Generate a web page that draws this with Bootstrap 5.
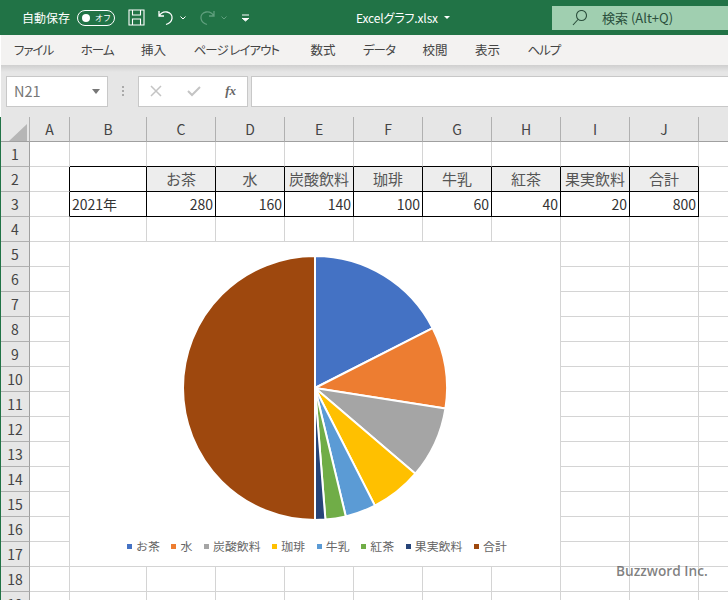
<!DOCTYPE html>
<html lang="ja">
<head>
<meta charset="utf-8">
<title>Excelグラフ.xlsx</title>
<link href="https://cdn.jsdelivr.net/npm/bootstrap@5.3.0/dist/css/bootstrap.min.css" rel="stylesheet">
<style>
html,body{height:600px;overflow:hidden;background:#fff}
body{font-family:"Noto Sans CJK JP","Liberation Sans",sans-serif;color:#444;width:728px;position:relative}
.xl-title{height:35px;background:#217346;color:#fff;font-size:12px;padding-left:22px}
.xl-toggle{width:38px;height:16px;border:1.3px solid #fff;border-radius:8px;margin-left:7px;padding:0 3px;font-size:8px;justify-content:space-between}
.xl-knob{width:8px;height:8px;background:#fff;border-radius:50%;margin-left:1px}
.xl-qat{margin-left:13px}
.xl-chev{margin-left:6px}
.xl-redo{margin-left:13px}
.xl-more{margin-left:14px}
.xl-file{position:absolute;left:356px;top:0;height:35px;font-feature-settings:"palt";letter-spacing:-.15px}
.xl-filecaret{margin-left:6px}
.xl-search{position:absolute;left:552px;top:6px;width:176px;height:24px;background:#a0cfb0;color:#2b4f3c;padding-left:20px}
.xl-search span{margin-left:15px;font-size:13px}
.xl-tabs{height:30px;background:#f3f2f1;font-size:12.5px;padding-left:13px;gap:27.5px;color:#444;margin-left:1px;font-feature-settings:"palt"}
.xl-kana{letter-spacing:-1px}
.xl-fbar{height:52px;padding:11px 0 11px 6px;background:linear-gradient(#cfcfcf 0,#e6e6e6 7px);margin-left:1px}
.xl-namebox,.xl-fbtns,.xl-finput{height:31px;background:#fff;border:1px solid #c8c8c8}
.xl-namebox{width:102px;padding:0 7px;font-size:14.5px;color:#777;margin-left:-1px}
.xl-caret{width:0;height:0;border:4px solid transparent;border-top:5px solid #777;border-bottom:0}
.xl-caret-w{border-width:3px;border-top-color:#fff;border-bottom:0}
.xl-dots{width:30px;color:#999}
.xl-fbtns{width:110px;margin-right:3px;padding:0 11px;justify-content:space-between}
.xl-fx{font:italic 700 13px "Liberation Serif",serif;color:#666}
.xl-finput{flex:1;border-right:0}
.xl-wrap{border-left:1px solid #217346;position:relative;height:483px;overflow:hidden;margin-top:0}
table.xl-sheet{table-layout:fixed;width:767px;border-collapse:separate;border-spacing:0;margin:0;font-size:14px;color:#333}
.xl-sheet col.c0{width:29px}
.xl-sheet col.c1{width:40px}
.xl-sheet col.c2{width:77px}
.xl-sheet col.c3{width:69px}
.xl-sheet th,.xl-sheet td{height:25px;padding:0 2px;line-height:24px;border:0;border-right:1px solid #d4d4d4;border-bottom:1px solid #d4d4d4;background:#fff;box-shadow:none;white-space:nowrap;overflow:hidden;font-weight:400;color:#333}
.xl-sheet thead th{background:#e6e6e6;text-align:center;color:#444;border-right-color:#b0b0b0;border-bottom-color:#a0a0a0}
.xl-sheet tbody th{background:#e6e6e6;text-align:center;color:#444;border-right-color:#a0a0a0;border-bottom-color:#b0b0b0}
.xl-sheet td.bk-r{border-right-color:#000}
.xl-sheet td.bk-b{border-bottom-color:#000}
.xl-sheet td.hd{background:#ededed;text-align:center;color:#555;padding:0;font-size:15px}
.xl-sheet td.num{text-align:right}
.xl-sheet th.xl-cnr{padding:0}
.xl-corner{display:block;margin:4px 0 0 8px}
.xl-chart{position:absolute;left:69px;top:125px;width:490px;height:324px;background:#fff;overflow:hidden}
.xl-chart svg{display:block}
.xl-legend{position:absolute;left:57px;top:294px;gap:11.7px;font-size:11.9px;line-height:20px;color:#666;white-space:nowrap}
.xl-sw{width:5px;height:5px;margin-right:4px;display:inline-block}
.c-a{background:#4472c4}.c-b{background:#ed7d31}.c-c{background:#a5a5a5}.c-d{background:#ffc000}
.c-e{background:#5b9bd5}.c-f{background:#70ad47}.c-g{background:#264478}.c-h{background:#9e480e}
.xl-mark{position:absolute;left:616px;top:562px;font-family:"Open Sans","Liberation Sans",sans-serif;font-size:13.7px;font-weight:600;color:rgba(80,80,80,.72);line-height:18px;white-space:nowrap}
</style>
</head>
<body>
<header class="xl-title d-flex align-items-center">
  <span>自動保存</span>
  <span class="xl-toggle d-flex align-items-center"><span class="xl-knob"></span><span>オフ</span></span>
  <svg class="xl-qat" width="17" height="17" viewBox="0 0 17 17" fill="none" stroke="#fff" stroke-width="1.1"><path d="M1 1h15v15H1zM4.500 1v5h8V1M4.500 16v-6h8v6"/></svg>
  <svg class="xl-qat" width="16" height="17" viewBox="0 0 16 17" fill="none" stroke="#fff" stroke-width="1.3"><path d="M1 2v5h5M1.300 7C3 3.500 6 2.500 9 3c3.500.7 5.500 3.500 5 6.500-.4 2.800-3 5-6 6"/></svg>
  <svg class="xl-chev" width="6" height="4" viewBox="0 0 6 4" fill="none" stroke="#fff"><path d="M.5.500 3 3 5.500.5"/></svg>
  <svg class="xl-redo" width="16" height="17" viewBox="0 0 16 17" fill="none" stroke="#5f9f7d" stroke-width="1.300"><path d="M15 2v5h-5M14.700 7C13 3.500 10 2.500 7 3c-3.500.7-5.500 3.500-5 6.500.4 2.800 3 5 6 6"/></svg>
  <svg class="xl-chev" width="6" height="4" viewBox="0 0 6 4" fill="none" stroke="#5f9f7d"><path d="M.5.500 3 3 5.500.5"/></svg>
  <svg class="xl-more" width="9" height="8" viewBox="0 0 9 8" fill="none" stroke="#fff"><path d="M1 1h7"/><path d="M1 4l3.500 3L8 4" fill="#fff"/></svg>
  <div class="xl-file d-flex align-items-center"><span>Excelグラフ.xlsx</span><span class="xl-caret xl-caret-w xl-filecaret"></span></div>
  <div class="xl-search d-flex align-items-center">
    <svg width="15" height="16" viewBox="0 0 15 16" fill="none" stroke="#2b4f3c" stroke-width="1.100"><circle cx="9.500" cy="5.500" r="5"/><path d="M6 9.500 1 15"/></svg>
    <span>検索 (Alt+Q)</span>
  </div>
</header>
<nav class="xl-tabs d-flex align-items-center">
  <span class="xl-kana">ファイル</span><span class="xl-kana">ホーム</span><span>挿入</span><span class="xl-kana">ページ レイアウト</span><span class="ms-1">数式</span><span class="xl-kana">データ</span><span>校閲</span><span>表示</span><span class="xl-kana">ヘルプ</span>
</nav>
<div class="xl-fbar d-flex align-items-center">
  <div class="xl-namebox d-flex align-items-center justify-content-between"><span>N21</span><span class="xl-caret"></span></div>
  <div class="xl-dots d-flex justify-content-center">
    <svg width="3" height="11" viewBox="0 0 3 11" fill="#aaa"><rect x="0" y="0" width="2" height="2"/><rect x="0" y="4" width="2" height="2"/><rect x="0" y="8" width="2" height="2"/></svg>
  </div>
  <div class="xl-fbtns d-flex align-items-center">
    <svg width="12" height="12" viewBox="0 0 12 12" stroke="#c4c4c4" stroke-width="1.500"><path d="M1 1l10 10M11 1 1 11"/></svg>
    <svg width="14" height="12" viewBox="0 0 14 12" fill="none" stroke="#c4c4c4" stroke-width="2"><path d="M1 6l4 4 8-8"/></svg>
    <span class="xl-fx">fx</span>
  </div>
  <div class="xl-finput"></div>
</div>
<div class="xl-wrap">
  <table class="table xl-sheet">
    <colgroup><col class="c0"><col class="c1"><col class="c2"><col class="c3"><col class="c3"><col class="c3"><col class="c3"><col class="c3"><col class="c3"><col class="c3"><col class="c3"><col class="c3"></colgroup>
    <thead><tr><th class="xl-cnr"><svg class="xl-corner" width="18" height="17" viewBox="0 0 18 17"><path d="M18 0v17H0z" fill="#b6b6b6"/></svg></th><th>A</th><th>B</th><th>C</th><th>D</th><th>E</th><th>F</th><th>G</th><th>H</th><th>I</th><th>J</th><th></th></tr></thead>
    <tbody>
      <tr><th>1</th><td></td><td class="bk-b"></td><td class="bk-b"></td><td class="bk-b"></td><td class="bk-b"></td><td class="bk-b"></td><td class="bk-b"></td><td class="bk-b"></td><td class="bk-b"></td><td class="bk-b"></td><td></td></tr>
      <tr><th>2</th><td class="bk-r"></td><td class="bk-r bk-b"></td><td class="bk-r bk-b hd">お茶</td><td class="bk-r bk-b hd">水</td><td class="bk-r bk-b hd">炭酸飲料</td><td class="bk-r bk-b hd">珈琲</td><td class="bk-r bk-b hd">牛乳</td><td class="bk-r bk-b hd">紅茶</td><td class="bk-r bk-b hd">果実飲料</td><td class="bk-r bk-b hd">合計</td><td></td></tr>
      <tr><th>3</th><td class="bk-r"></td><td class="bk-r bk-b">2021年</td><td class="bk-r bk-b num">280</td><td class="bk-r bk-b num">160</td><td class="bk-r bk-b num">140</td><td class="bk-r bk-b num">100</td><td class="bk-r bk-b num">60</td><td class="bk-r bk-b num">40</td><td class="bk-r bk-b num">20</td><td class="bk-r bk-b num">800</td><td></td></tr>
      <tr><th>4</th><td></td><td></td><td></td><td></td><td></td><td></td><td></td><td></td><td></td><td></td><td></td></tr>
      <tr><th>5</th><td></td><td></td><td></td><td></td><td></td><td></td><td></td><td></td><td></td><td></td><td></td></tr>
      <tr><th>6</th><td></td><td></td><td></td><td></td><td></td><td></td><td></td><td></td><td></td><td></td><td></td></tr>
      <tr><th>7</th><td></td><td></td><td></td><td></td><td></td><td></td><td></td><td></td><td></td><td></td><td></td></tr>
      <tr><th>8</th><td></td><td></td><td></td><td></td><td></td><td></td><td></td><td></td><td></td><td></td><td></td></tr>
      <tr><th>9</th><td></td><td></td><td></td><td></td><td></td><td></td><td></td><td></td><td></td><td></td><td></td></tr>
      <tr><th>10</th><td></td><td></td><td></td><td></td><td></td><td></td><td></td><td></td><td></td><td></td><td></td></tr>
      <tr><th>11</th><td></td><td></td><td></td><td></td><td></td><td></td><td></td><td></td><td></td><td></td><td></td></tr>
      <tr><th>12</th><td></td><td></td><td></td><td></td><td></td><td></td><td></td><td></td><td></td><td></td><td></td></tr>
      <tr><th>13</th><td></td><td></td><td></td><td></td><td></td><td></td><td></td><td></td><td></td><td></td><td></td></tr>
      <tr><th>14</th><td></td><td></td><td></td><td></td><td></td><td></td><td></td><td></td><td></td><td></td><td></td></tr>
      <tr><th>15</th><td></td><td></td><td></td><td></td><td></td><td></td><td></td><td></td><td></td><td></td><td></td></tr>
      <tr><th>16</th><td></td><td></td><td></td><td></td><td></td><td></td><td></td><td></td><td></td><td></td><td></td></tr>
      <tr><th>17</th><td></td><td></td><td></td><td></td><td></td><td></td><td></td><td></td><td></td><td></td><td></td></tr>
      <tr><th>18</th><td></td><td></td><td></td><td></td><td></td><td></td><td></td><td></td><td></td><td></td><td></td></tr>
      <tr><th>19</th><td></td><td></td><td></td><td></td><td></td><td></td><td></td><td></td><td></td><td></td><td></td></tr>
    </tbody>
  </table>
  <div class="xl-chart">
    <svg width="490" height="324" viewBox="0 0 490 324" stroke="#fff" stroke-width="2" stroke-linejoin="round">
      <path d="M245 146V14A132 132 0 0 1 362.600 86.100Z" fill="#4472c4"/>
      <path d="M245 146L362.600 86.100A132 132 0 0 1 375.400 166.600Z" fill="#ed7d31"/>
      <path d="M245 146L375.400 166.600A132 132 0 0 1 345.400 231.700Z" fill="#a5a5a5"/>
      <path d="M245 146L345.400 231.700A132 132 0 0 1 304.900 263.600Z" fill="#ffc000"/>
      <path d="M245 146L304.900 263.600A132 132 0 0 1 275.800 274.400Z" fill="#5b9bd5"/>
      <path d="M245 146L275.800 274.400A132 132 0 0 1 255.400 277.600Z" fill="#70ad47"/>
      <path d="M245 146L255.400 277.600A132 132 0 0 1 245 278Z" fill="#264478"/>
      <path d="M245 146V278A132 132 0 0 1 245 14Z" fill="#9e480e"/>
    </svg>
    <div class="xl-legend d-flex align-items-center">
      <span class="d-flex align-items-center"><i class="xl-sw c-a"></i>お茶</span>
      <span class="d-flex align-items-center"><i class="xl-sw c-b"></i>水</span>
      <span class="d-flex align-items-center"><i class="xl-sw c-c"></i>炭酸飲料</span>
      <span class="d-flex align-items-center"><i class="xl-sw c-d"></i>珈琲</span>
      <span class="d-flex align-items-center"><i class="xl-sw c-e"></i>牛乳</span>
      <span class="d-flex align-items-center"><i class="xl-sw c-f"></i>紅茶</span>
      <span class="d-flex align-items-center"><i class="xl-sw c-g"></i>果実飲料</span>
      <span class="d-flex align-items-center"><i class="xl-sw c-h"></i>合計</span>
    </div>
  </div>
</div>
<div class="xl-mark">Buzzword Inc.</div>
<script src="https://cdn.jsdelivr.net/npm/bootstrap@5.3.0/dist/js/bootstrap.bundle.min.js"></script>
</body>
</html>
